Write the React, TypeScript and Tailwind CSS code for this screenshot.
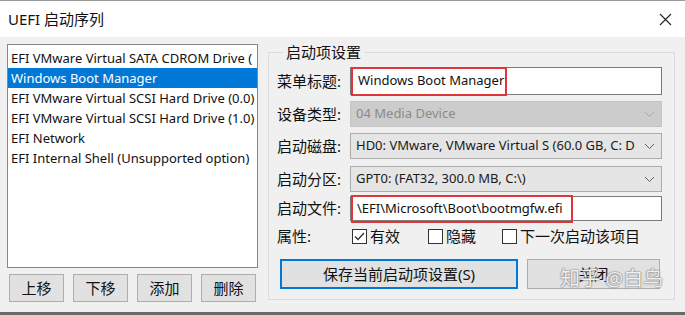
import React from 'react'

const font = { fontFamily: '"Noto Sans", "Noto Sans CJK SC", sans-serif' }

const entries = [
  'EFI VMware Virtual SATA CDROM Drive (',
  'Windows Boot Manager',
  'EFI VMware Virtual SCSI Hard Drive (0.0)',
  'EFI VMware Virtual SCSI Hard Drive (1.0)',
  'EFI Network',
  'EFI Internal Shell (Unsupported option)',
]

const Chevron = ({ color = '#606060' }: { color?: string }) => (
  <svg width="11" height="7" viewBox="0 0 11 7" className="shrink-0">
    <path d="M1 1 L5.5 5.5 L10 1" fill="none" stroke={color} strokeWidth="1" />
  </svg>
)

const Select = ({ value, disabled }: { value: string; disabled?: boolean }) => (
  <div
    className={`flex h-[26px] w-[312px] items-center justify-between border pl-[5px] pr-[6px] ${
      disabled ? 'border-[#c4c4c4] bg-[#cccccc] text-[#8a8a8a]' : 'border-[#acacac] bg-[#e5e5e5] text-[#1a1a1a]'
    }`}
  >
    <span className="whitespace-nowrap">{value}</span>
    <Chevron color={disabled ? '#a8a8a8' : '#606060'} />
  </div>
)

const Checkbox = ({ checked, label }: { checked?: boolean; label: string }) => (
  <div className="flex items-center gap-[3px]">
    <div className="flex h-[15px] w-[15px] items-center justify-center border border-[#333] bg-white">
      {checked && (
        <svg width="11" height="9" viewBox="0 0 11 9">
          <path d="M1 4.5 L4 7.5 L10 1" fill="none" stroke="#333" strokeWidth="1.3" />
        </svg>
      )}
    </div>
    <span>{label}</span>
  </div>
)

const Row = ({ label, children }: { label: string; children: React.ReactNode }) => (
  <div className="flex items-center">
    <span className="w-[73px] shrink-0 whitespace-nowrap text-[15px]">{label}</span>
    {children}
  </div>
)

export default function App() {
  return (
    <div className="flex h-[315px] w-[685px] flex-col overflow-hidden bg-[#f0f0f0] text-[13px] text-[#111]" style={font}>
      {/* title bar */}
      <div className="flex h-[37px] shrink-0 items-center justify-between border-t border-[#9a9a9a] bg-white pl-[8px] pr-[13px]">
        <span className="text-[15px]">UEFI 启动序列</span>
        <svg width="13" height="13" viewBox="0 0 13 13">
          <path d="M1 1 L12 12 M12 1 L1 12" stroke="#222" strokeWidth="1.1" />
        </svg>
      </div>

      <div className="flex flex-1 pl-[7px] pt-[7px]">
        {/* left column */}
        <div className="flex w-[251px] flex-col">
          <div className="h-[224px] border border-[#828790] bg-white pt-[3px]">
            {entries.map((e, i) => (
              <div
                key={e}
                className={`h-[20px] overflow-hidden whitespace-nowrap pl-[3px] leading-[20px] ${
                  i === 1 ? 'bg-[#0078d7] text-white' : ''
                }`}
              >
                {e}
              </div>
            ))}
          </div>
          <div className="mt-[6px] flex gap-[9px] pl-[2px]">
            {['上移', '下移', '添加', '删除'].map((b) => (
              <div
                key={b}
                className="flex h-[28px] w-[55px] items-center justify-center border border-[#adadad] bg-[#e1e1e1] text-[15px]"
              >
                {b}
              </div>
            ))}
          </div>
        </div>

        {/* group box */}
        <fieldset className="ml-[10px] mb-[12px] w-[407px] border border-[#dcdcdc] pl-[8px] pt-[7px]">
          <legend className="ml-[6px] px-[3px] text-[15px] leading-[16px]">启动项设置</legend>
          <div className="flex flex-col">
            <Row label="菜单标题:">
              <div className="flex h-[28px] w-[312px] items-center border border-[#7a7a7a] bg-white">
                <div className="flex h-[29px] w-[156px] items-center border-2 border-[#e0353b] pl-[5px]">
                  Windows Boot Manager
                </div>
              </div>
            </Row>
            <div className="mt-[6px]">
              <Row label="设备类型:">
                <Select value="04  Media Device" disabled />
              </Row>
            </div>
            <div className="mt-[6px]">
              <Row label="启动磁盘:">
                <Select value="HD0: VMware, VMware Virtual S (60.0 GB, C: D" />
              </Row>
            </div>
            <div className="mt-[7px]">
              <Row label="启动分区:">
                <Select value="GPT0: (FAT32, 300.0 MB, C:\)" />
              </Row>
            </div>
            <div className="mt-[4px]">
              <Row label="启动文件:">
                <div className="flex h-[25px] w-[312px] items-center border border-[#7a7a7a] bg-white">
                  <div className="flex h-[28px] w-[222px] items-center border-2 border-[#e0353b] pl-[4px]">
                    \EFI\Microsoft\Boot\bootmgfw.efi
                  </div>
                </div>
              </Row>
            </div>
            <div className="mt-[4px] flex h-[22px] items-center text-[15px]">
              <span className="w-[75px] shrink-0">属性:</span>
              <div className="flex gap-[28px]">
                <Checkbox checked label="有效" />
                <div className="flex gap-[26px]">
                  <Checkbox label="隐藏" />
                  <Checkbox label="下一次启动该项目" />
                </div>
              </div>
            </div>
            <div className="mt-[12px] flex gap-[9px] pl-[3px]">
              <div className="flex h-[30px] w-[238px] items-center justify-center border-2 border-[#0078d7] bg-[#e1e1e1] text-[15px]">
                保存当前启动项设置(S)
              </div>
              <div className="relative flex h-[30px] w-[133px] items-center justify-center border border-[#adadad] bg-[#e1e1e1] text-[15px]">
                关闭
                <span
                  className="absolute left-[32px] top-[4px] whitespace-nowrap text-[20px] text-white/90"
                  style={{ textShadow: '0 0 2px #777, 0 0 1px #555' }}
                >
                  知乎 @白鸟
                </span>
              </div>
            </div>
          </div>
        </fieldset>
      </div>
      <div className="h-[3px] shrink-0 bg-[#6a6a6a]" />
    </div>
  )
}
